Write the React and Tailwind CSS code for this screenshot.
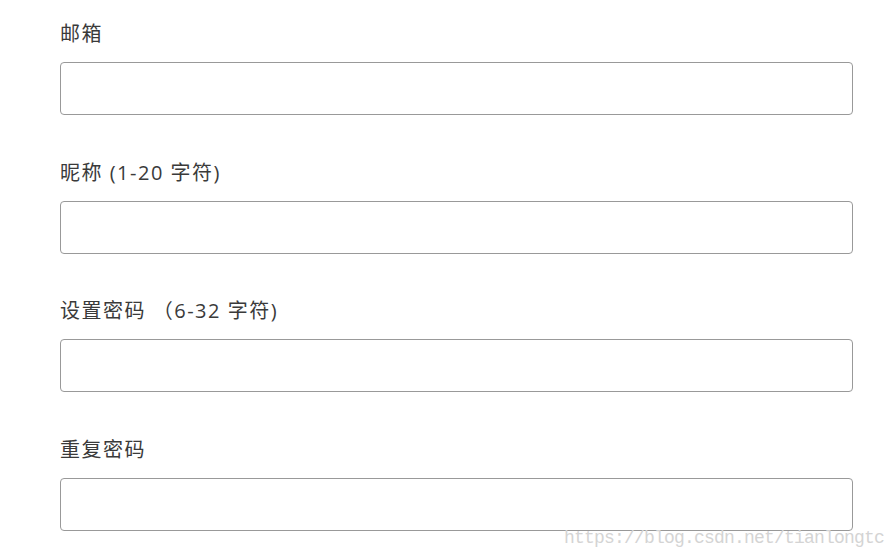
import React from 'react'

const fields = ['邮箱', '昵称 (1-20 字符)', '设置密码 （6-32 字符)', '重复密码']

export default function App() {
  return (
    <main className="relative w-[896px] h-[557px] bg-white overflow-hidden">
      <div className="pl-[60px] pr-[43px] pt-[20px] flex flex-col gap-[43.6px]">
        {fields.map((label) => (
          <div key={label} className="flex flex-col">
            <label className="h-[28px] leading-[28px] text-[20px] tracking-[1.5px] text-[#3a3a3a] mb-[14px] font-['Open_Sans','Noto_Sans_CJK_SC',sans-serif]">
              {label}
            </label>
            <input
              type="text"
              className="h-[53px] w-full border border-[#999] rounded-[4px] bg-white outline-none"
            />
          </div>
        ))}
      </div>

      {/* watermark */}
      <div className="absolute left-[564px] top-[526px] text-[18px] leading-[24px] text-[#d4d4d4] font-['Liberation_Mono',monospace] tracking-[-0.8px]">
        https://blog.csdn.net/tianlongtc
      </div>
    </main>
  )
}
